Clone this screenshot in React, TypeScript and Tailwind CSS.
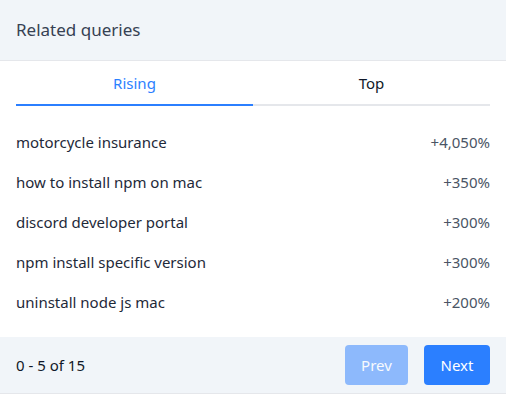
import React, { useState } from 'react';

const queries = [
  { label: 'motorcycle insurance', value: '+4,050%' },
  { label: 'how to install npm on mac', value: '+350%' },
  { label: 'discord developer portal', value: '+300%' },
  { label: 'npm install specific version', value: '+300%' },
  { label: 'uninstall node js mac', value: '+200%' },
];

export default function App() {
  const [tab, setTab] = useState<'rising' | 'top'>('rising');

  return (
    <div className="w-[506px] bg-white font-['Noto_Sans',sans-serif]">
      <div className="bg-slate-100 border-b border-gray-200 px-4 py-4">
        <h2 className="text-[17px] leading-7 text-gray-700">Related queries</h2>
      </div>

      <div className="flex mx-4">
        {(['rising', 'top'] as const).map(t => (
          <button
            key={t}
            onClick={() => setTab(t)}
            className={`flex-1 pt-[10px] pb-[9px] text-[15px] leading-6 border-b-2 ${
              tab === t ? 'border-blue-500 text-blue-500' : 'border-gray-200 text-gray-900'
            }`}
          >
            {t === 'rising' ? 'Rising' : 'Top'}
          </button>
        ))}
      </div>

      <ul className="px-4 pt-4 pb-[15px]">
        {queries.map(q => (
          <li key={q.label} className="flex items-center justify-between py-2.5 text-[15px] leading-5">
            <span className="text-gray-800">{q.label}</span>
            <span className="text-gray-600">{q.value}</span>
          </li>
        ))}
      </ul>

      <div className="bg-slate-100 border-b border-gray-200 px-4 py-2 flex items-center justify-between">
        <span className="text-[15px] text-gray-900">0 - 5 of 15</span>
        <div className="flex gap-4">
          <button disabled className="h-10 w-[63px] rounded bg-blue-500 opacity-50 text-white text-[15px]">Prev</button>
          <button className="h-10 w-[66px] rounded bg-blue-500 text-white text-[15px]">Next</button>
        </div>
      </div>
    </div>
  );
}
